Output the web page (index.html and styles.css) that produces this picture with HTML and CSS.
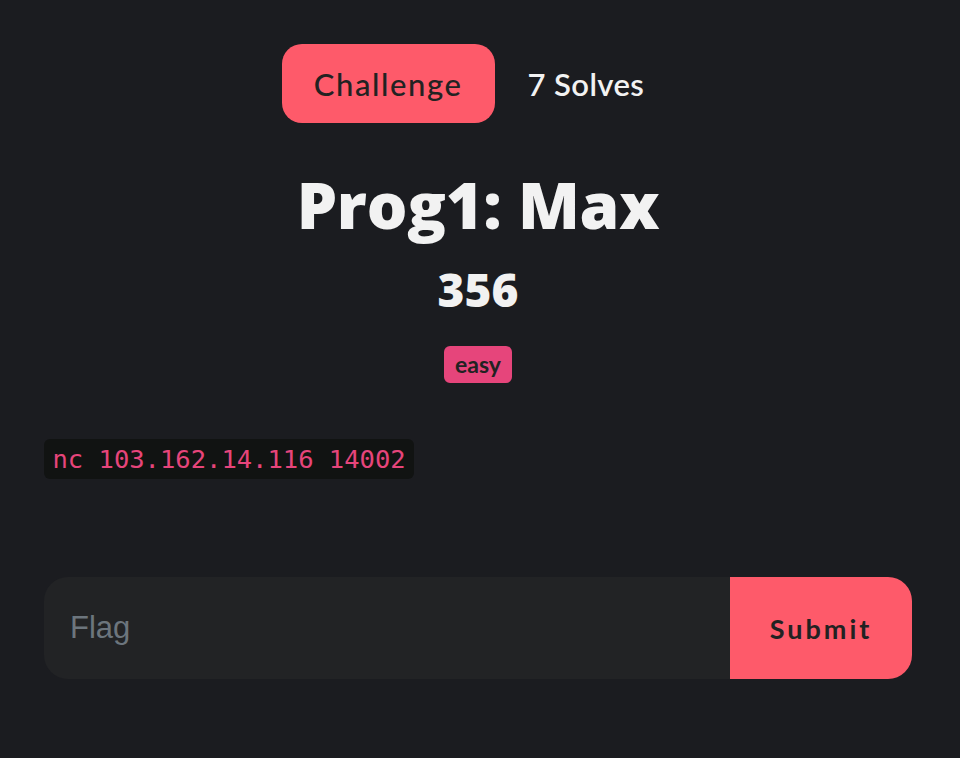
FILE: index.html
```html
<!DOCTYPE html>
<html>
<head>
<meta charset="utf-8">
<link rel="stylesheet" href="styles.css">
</head>
<body>
<div class="page">
  <nav class="tabs">
    <span class="tab active">Challenge</span>
    <span class="tab">7 Solves</span>
  </nav>
  <h1 class="title">Prog1: Max</h1>
  <div class="points">356</div>
  <div class="tags"><span class="tag">easy</span></div>
  <div class="desc"><code class="cmd">nc 103.162.14.116 14002</code></div>
  <form class="flag-form">
    <input class="flag-input" type="text" placeholder="Flag">
    <button class="submit" type="button">Submit</button>
  </form>
</div>
</body>
</html>
```
FILE: styles.css
```css
html, body {
  margin: 0;
  padding: 0;
  background: #1b1c20;
}
.page {
  padding: 44px 48px 0 44px;
  display: flex;
  flex-direction: column;
  align-items: center;
  font-family: "Lato", "Noto Sans", sans-serif;
  color: #f2f2f2;
}
.tabs {
  display: flex;
  align-items: center;
  gap: 33px;
  margin-right: 30px;
}
.tab {
  font-size: 31px;
  font-weight: 600;
  letter-spacing: 0.4px;
  height: 79px;
  display: flex;
  align-items: center;
  color: #f2f2f2;
}
.tab.active {
  background: #fe5a6a;
  color: #222;
  font-weight: 500;
  letter-spacing: 1.6px;
  padding: 0 32px;
  border-radius: 20px;
}
.title {
  margin: 42px 0 0;
  font-family: "Open Sans", "Lato", sans-serif;
  font-weight: 800;
  font-size: 64px;
  line-height: 80px;
  letter-spacing: -0.2px;
  color: #f2f2f2;
}
.points {
  margin-top: 16px;
  font-family: "Open Sans", "Lato", sans-serif;
  font-weight: 800;
  font-size: 46px;
  line-height: 56px;
  color: #f2f2f2;
}
.tags {
  margin-top: 29px;
  line-height: 0;
}
.tag {
  display: inline-block;
  background: #e6457b;
  color: #222;
  font-weight: 700;
  font-size: 23px;
  line-height: 37px;
  padding: 0 11px;
  border-radius: 6px;
}
.desc {
  align-self: stretch;
  margin-top: 56px;
  line-height: 0;
}
.cmd {
  display: inline-block;
  background: #111312;
  color: #e6457b;
  font-family: "DejaVu Sans Mono", monospace;
  font-size: 25.5px;
  line-height: 40px;
  padding: 0 8.5px;
  border-radius: 6px;
}
.flag-form {
  align-self: stretch;
  margin-top: 98px;
  display: flex;
  height: 102px;
}
.flag-input {
  flex: 1;
  min-width: 0;
  border: none;
  outline: none;
  background: #222325;
  border-radius: 24px 0 0 24px;
  padding: 0 26px;
  font-family: "Liberation Sans", Arial, sans-serif;
  font-size: 31px;
  color: #ddd;
}
.flag-input::placeholder {
  color: #6c757d;
}
.submit {
  width: 182px;
  border: none;
  background: #fe5a6a;
  border-radius: 0 24px 24px 0;
  font-family: "Lato", sans-serif;
  font-weight: 700;
  font-size: 27px;
  letter-spacing: 3px;
  color: #222;
  padding: 0;
}
```
